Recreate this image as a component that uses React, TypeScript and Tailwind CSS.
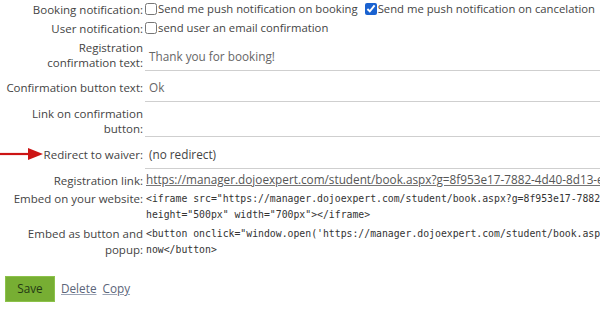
import React from "react";

const Label = ({ children, top = false }: { children: React.ReactNode; top?: boolean }) => (
  <div className={`w-[145px] shrink-0 text-right pr-[2px] text-[#444] text-[11.5px] leading-[15px] ${top ? "self-start" : "self-center"}`}>
    {children}
  </div>
);

const Field = ({ value, light = false }: { value?: string; light?: boolean }) => (
  <div className="flex-1 min-w-0 self-end mb-[1px] h-[28px] border-b border-[#cfcfcf] flex items-center pl-[4px]">
    <span className={light ? "text-[#666]" : "text-[#444]"}>{value}</span>
  </div>
);

const mono = { fontFamily: '"DejaVu Sans Mono", "Liberation Mono", monospace' };

export default function App() {
  return (
    <div
      className="w-[600px] h-[309px] overflow-hidden bg-white text-[11.75px] whitespace-nowrap"
      style={{ fontFamily: '"Open Sans", "Noto Sans", sans-serif' }}
    >
      <div className="flex flex-col">
        <div className="flex items-center h-[18px]">
          <Label>Booking notification:</Label>
          <label className="flex items-center text-[#444] text-[11.3px]">
            <input type="checkbox" className="m-0 mr-[1px] w-[12px] h-[12px]" />
            Send me push notification on booking
          </label>
          <label className="flex items-center text-[#444] text-[11.3px] ml-[7px]">
            <input type="checkbox" defaultChecked className="m-0 mr-[1px] w-[12px] h-[12px] accent-[#1a62d0]" />
            Send me push notification on cancelation
          </label>
        </div>
        <div className="flex items-center h-[20px]">
          <Label>User notification:</Label>
          <label className="flex items-center text-[#444] text-[11.3px]">
            <input type="checkbox" className="m-0 mr-[1px] w-[12px] h-[12px]" />
            send user an email confirmation
          </label>
        </div>
        <div className="flex h-[34px]">
          <Label>
            Registration
            <br />
            confirmation text:
          </Label>
          <Field value="Thank you for booking!" light />
        </div>
        <div className="flex h-[31px]">
          <Label>Confirmation button text:</Label>
          <Field value="Ok" light />
        </div>
        <div className="flex h-[35px]">
          <Label>
            Link on confirmation
            <br />
            button:
          </Label>
          <Field />
        </div>
        <div className="flex h-[32px] relative">
          <svg className="absolute left-0 top-[9px]" width="44" height="14" viewBox="0 0 44 14">
            <line x1="0" y1="7" x2="30" y2="7" stroke="#cc1414" strokeWidth="2.2" />
            <polygon points="28,1 43,7 28,13" fill="#cc1414" />
          </svg>
          <Label>Redirect to waiver:</Label>
          <Field value="(no redirect)" />
        </div>
        <div className="flex items-center h-[20px]">
          <Label>Registration link:</Label>
          <a href="#" className="pl-[1px] text-[#555] underline decoration-[#777]">
            https://manager.dojoexpert.com/student/book.aspx?g=8f953e17-7882-4d40-8d13-e5c2d7a1b3f0
          </a>
        </div>
        <div className="flex h-[35px] pt-[1px]">
          <Label top>
            <span className="leading-[16px] block">Embed on your website:</span>
          </Label>
          <div className="pl-[1px] text-[9.8px] leading-[16px] text-[#333]" style={mono}>
            &lt;iframe src="https://manager.dojoexpert.com/student/book.aspx?g=8f953e17-7882-4d40-8d13-e5c2d7a1b3f0"
            <br />
            height="500px" width="700px"&gt;&lt;/iframe&gt;
          </div>
        </div>
        <div className="flex h-[33px] pt-[1px]">
          <Label top>
            <span className="leading-[16px] block">
              Embed as button and
              <br />
              popup:
            </span>
          </Label>
          <div className="pl-[1px] text-[9.8px] leading-[16px] text-[#333]" style={mono}>
            &lt;button onclick="window.open('https://manager.dojoexpert.com/student/book.aspx?g=8f953e17-7882')"&gt;Book
            <br />
            now&lt;/button&gt;
          </div>
        </div>
        <div className="flex items-center gap-[6px] pl-[5px] mt-[18px]">
          <button className="w-[50px] h-[26px] bg-[#77ae33] border border-[#8cc24a] text-[#253a14] text-[11.75px]">
            Save
          </button>
          <a href="#" className="text-[#5b6579] underline decoration-[#9aa3b5]">Delete</a>
          <a href="#" className="text-[#5b6579] underline decoration-[#9aa3b5]">Copy</a>
        </div>
      </div>
    </div>
  );
}
